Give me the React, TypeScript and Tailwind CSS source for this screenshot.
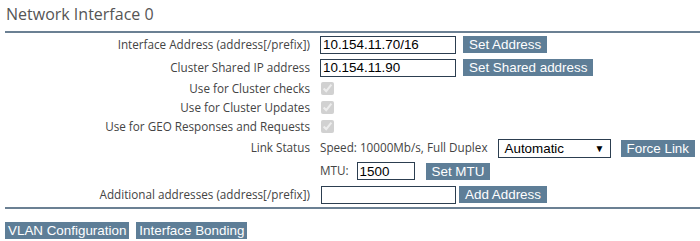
import React from 'react';

const label = "text-right pr-[10px] text-[11.7px] text-[#444]";
const btnBase = "bg-[#5e7e97] text-white text-[13.4px] leading-[17px] h-[17px] font-['Liberation_Sans',Arial,sans-serif]";
const btn = `${btnBase} px-[6px]`;
const field = "border border-[#2c3e50] h-[18px] px-[2px] text-[13.4px] leading-[16px] text-black font-['Liberation_Sans',Arial,sans-serif] outline-none";

function Check() {
  return <input type="checkbox" checked disabled readOnly className="w-[13px] h-[13px] m-0" />;
}

export default function App() {
  return (
    <div className="w-[700px] h-[241px] bg-white font-['Open_Sans','Noto_Sans',sans-serif] text-[#444] overflow-hidden">
      <div className="h-[31px] pl-[6px] pt-[2px] text-[16px] text-[#555]">Network Interface 0</div>

      <div className="ml-[5px] border-t-2 border-b-2 border-[#6b8093] grid grid-cols-[315px_1fr] items-center">
        <div className={`${label} h-[23px] leading-[23px]`}>Interface Address (address[/prefix])</div>
        <div className="flex items-center">
          <input className={`${field} w-[136px]`} defaultValue="10.154.11.70/16" />
          <button className={`${btn} ml-[7px]`}>Set Address</button>
        </div>

        <div className={`${label} h-[23px] leading-[23px]`}>Cluster Shared IP address</div>
        <div className="flex items-center">
          <input className={`${field} w-[136px]`} defaultValue="10.154.11.90" />
          <button className={`${btn} ml-[7px]`}>Set Shared address</button>
        </div>

        <div className={`${label} h-[19px] leading-[19px]`}>Use for Cluster checks</div>
        <div className="flex items-center pl-[1px]"><Check /></div>

        <div className={`${label} h-[19px] leading-[19px]`}>Use for Cluster Updates</div>
        <div className="flex items-center pl-[1px]"><Check /></div>

        <div className={`${label} h-[19px] leading-[19px]`}>Use for GEO Responses and Requests</div>
        <div className="flex items-center pl-[1px]"><Check /></div>

        <div className={`${label} self-start pt-[3px] leading-[17px]`}>Link Status</div>
        <div className="flex flex-col">
          <div className="flex items-center h-[24px]">
            <span className="text-[11.7px]">Speed: 10000Mb/s, Full Duplex</span>
            <div className="relative ml-[10px] w-[113px] h-[19px] border border-[#2c3e50] font-['Liberation_Sans',Arial,sans-serif] text-[13.4px] leading-[17px] pl-[6px] text-black">
              Automatic
              <span className="absolute right-[5px] top-0 text-[10px] leading-[17px]">▼</span>
            </div>
            <button className={`${btn} ml-[10px]`}>Force Link</button>
          </div>
          <div className="flex items-center h-[22px]">
            <span className="text-[11.7px]">MTU:</span>
            <input className={`${field} w-[58px] ml-[8px]`} defaultValue="1500" />
            <button className={`${btn} ml-[11px]`}>Set MTU</button>
          </div>
        </div>

        <div className={`${label} h-[25px] leading-[25px]`}>Additional addresses (address[/prefix])</div>
        <div className="flex items-center pl-[1px]">
          <input className={`${field} w-[135px]`} defaultValue="" />
          <button className={`${btn} ml-[3px]`}>Add Address</button>
        </div>
      </div>

      <div className="flex gap-[7px] ml-[5px] mt-[13px]">
        <button className={`${btnBase} px-[3px]`}>VLAN Configuration</button>
        <button className={`${btnBase} px-[3px]`}>Interface Bonding</button>
      </div>
    </div>
  );
}
